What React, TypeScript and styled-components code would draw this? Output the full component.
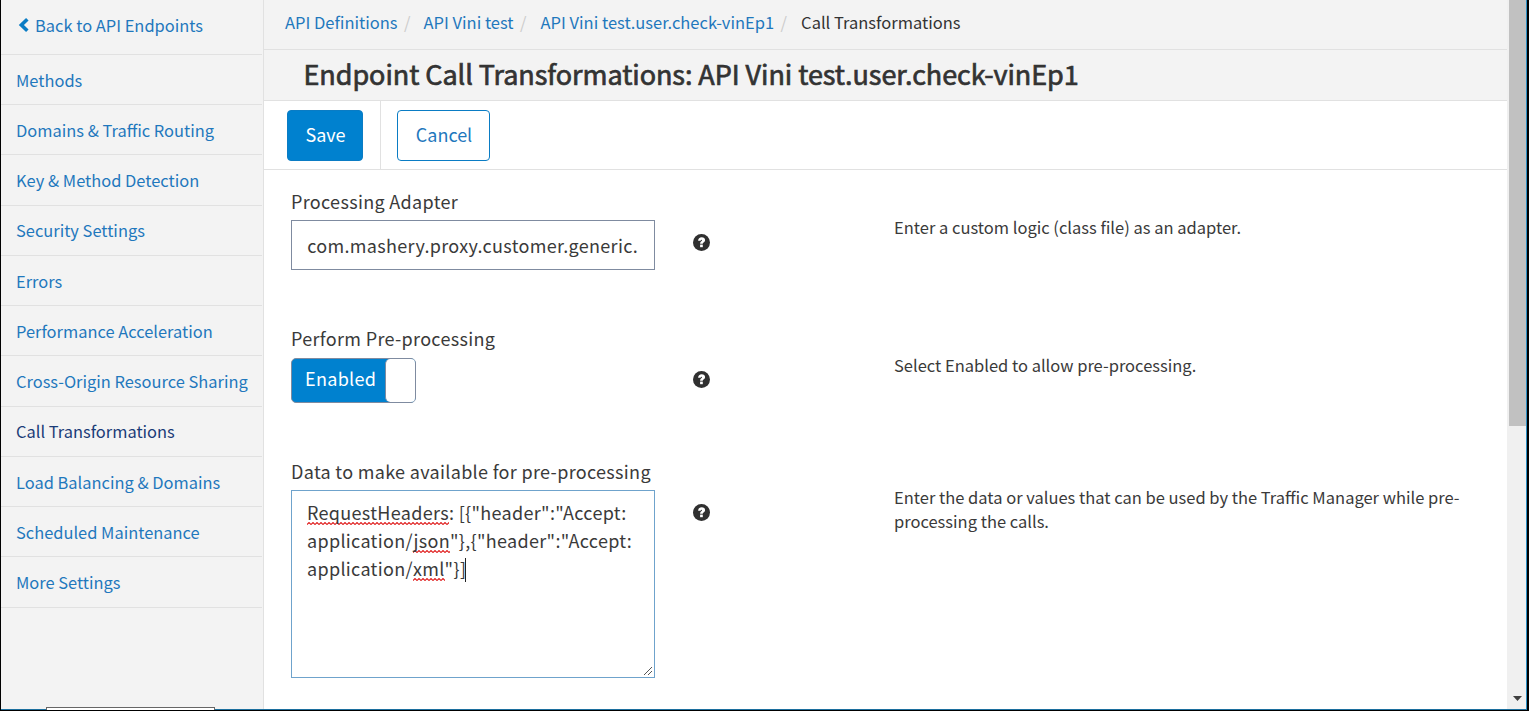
import React from 'react';
import styled, { createGlobalStyle } from 'styled-components';

const Global = createGlobalStyle`
  * { box-sizing: border-box; }
  html, body { margin: 0; padding: 0; overflow: hidden; }
  body { font-family: "Noto Sans CJK SC", "Noto Sans", sans-serif; color: #3a3a3a; background: #fff; }
`;

const Frame = styled.div`
  display: flex;
  width: 1529px;
  height: 711px;
  border-left: 1px solid #000;
  border-right: 2px solid #000;
  border-bottom: 1px solid #000;
  position: relative;
  overflow: hidden;
`;

const Window = styled.div`
  display: flex;
  flex: 1;
  min-width: 0;
  border-right: 1px solid #2a8fc4;
  border-bottom: 1px solid #1c6f9e;
`;

const Sidebar = styled.nav`
  width: 263px;
  flex: none;
  background: #f3f3f3;
  border-right: 1px solid #e1e1e1;
`;

const Item = styled.a<{ $first?: boolean; $active?: boolean }>`
  display: flex;
  align-items: center;
  gap: 5px;
  height: ${p => (p.$first ? 54.9 : 50.25)}px;
  margin-right: 1px;
  padding: ${p => (p.$first ? '0 0 4px 17px' : '0 0 0 15px')};
  border-bottom: 1px solid #e1e1e1;
  color: ${p => (p.$active ? '#1b3c78' : '#1f78bd')};
  font-size: 16.45px;
  line-height: 24px;
  white-space: nowrap;
`;

const Main = styled.main`
  flex: 1;
  min-width: 0;
  background: #fff;
`;

const Crumbs = styled.div`
  display: flex;
  height: 50px;
  padding: 10px 0 0 21px;
  background: #f3f3f3;
  border-bottom: 1px solid #e1e1e1;
  font-size: 16.5px;
  line-height: 24px;
  white-space: nowrap;
`;

const Crumb = styled.span<{ $link?: boolean }>`
  color: ${p => (p.$link ? '#1f78bd' : '#333')};
`;

const Slash = styled.span<{ $w: number }>`
  width: ${p => p.$w}px;
  padding-left: 6.5px;
  color: #ccc;
`;

const Title = styled.h1`
  margin: 0;
  height: 51px;
  padding: 4px 0 0 39.5px;
  background: #f3f3f3;
  border-bottom: 1px solid #e1e1e1;
  color: #333;
  font-size: 27px;
  line-height: 40px;
  font-weight: 400;
  letter-spacing: -0.06px;
  -webkit-text-stroke: 0.7px #333;
  white-space: nowrap;
`;

const Toolbar = styled.div`
  display: flex;
  height: 69px;
  border-bottom: 1px solid #e1e1e1;
`;

const ToolCell = styled.div<{ $divided?: boolean }>`
  padding: 9px 0 0 ${p => (p.$divided ? 23 : 16)}px;
  width: ${p => (p.$divided ? 117 : 120)}px;
  ${p => p.$divided && 'border-right: 1px solid #e1e1e1;'}
`;

const Button = styled.button<{ $primary?: boolean; $w: number }>`
  display: block;
  width: ${p => p.$w}px;
  height: 51px;
  padding: 0 0 3px 1px;
  border: 1px solid #0a7cc4;
  border-radius: 4px;
  background: ${p => (p.$primary ? '#0081cf' : '#fff')};
  color: ${p => (p.$primary ? '#fff' : '#1f78bd')};
  font-family: inherit;
  font-size: 18px;
  line-height: 28px;
`;

const Form = styled.div`
  padding: 19px 0 0 27px;
`;

const Row = styled.section<{ $h: number }>`
  display: flex;
  align-items: flex-start;
  height: ${p => p.$h}px;
`;

const Field = styled.div`
  width: 364px;
  flex: none;
`;

const Label = styled.label`
  display: block;
  height: 31px;
  font-size: 18px;
  line-height: 24px;
  letter-spacing: 0.32px;
  white-space: nowrap;
`;

const Input = styled.div`
  height: 50px;
  padding: 10px 0 0 15.25px;
  border: 1px solid #7f8ba0;
  font-size: 18px;
  line-height: 28px;
  letter-spacing: 0.32px;
  white-space: nowrap;
`;

const Area = styled.div`
  position: relative;
  height: 188px;
  padding: 7px 0 0 15px;
  border: 1px solid #6fa3cc;
  font-size: 18px;
  line-height: 28px;
  letter-spacing: 0.32px;
  white-space: nowrap;
`;

const Misspelt = styled.span`
  padding-bottom: 1px;
  background: url("data:image/svg+xml,%3Csvg xmlns='http://www.w3.org/2000/svg' width='4' height='3'%3E%3Cpath d='M-1 1.500L0 2.500L2 0.500L4 2.500L5 1.500' fill='none' stroke='%23e02020' stroke-width='1.100'/%3E%3C/svg%3E") repeat-x left bottom 1px;
`;

const Caret = styled.span`
  display: inline-block;
  width: 1px;
  height: 24px;
  margin-left: -1px;
  background: #222;
  vertical-align: -6px;
`;

const Grip = styled.svg`
  position: absolute;
  right: 1px;
  bottom: 1px;
`;

const Toggle = styled.div`
  display: flex;
  width: 125px;
  height: 45px;
  margin-top: 1px;
  border: 1px solid #7f8ba0;
  border-radius: 5px;
  background: #0081cf;
  overflow: hidden;
`;

const ToggleText = styled.span`
  width: 93px;
  padding: 5px 0 0 13px;
  color: #fff;
  font-size: 18px;
  line-height: 28px;
  letter-spacing: 0.32px;
`;

const Knob = styled.span`
  flex: 1;
  background: #fff;
  border-left: 1px solid #7f8ba0;
  border-radius: 5px 0 0 5px;
`;

const Help = styled.div`
  width: 239px;
  flex: none;
  padding: 45px 0 0 38px;
  line-height: 0;
`;

const Hint = styled.p<{ $top?: number }>`
  margin: 0;
  width: 590px;
  padding-top: ${p => p.$top ?? 26}px;
  font-size: 16.5px;
  line-height: 24px;
`;

const Scroll = styled.div`
  width: 19px;
  flex: none;
  display: flex;
  flex-direction: column;
  justify-content: space-between;
  padding-left: 2px;
  background: #f0f0f0;
`;

const Thumb = styled.div`
  height: 426px;
  background: #c1c1c1;
`;

const StatusBubble = styled.div`
  position: absolute;
  left: 45px;
  bottom: 0;
  width: 169px;
  height: 3px;
  background: #fff;
  border: 1px solid #666;
  border-bottom: 0;
`;

const HelpIcon = () => (
  <Help>
    <svg width="17" height="17" viewBox="0 0 17 17">
      <circle cx="8.5" cy="8.5" r="8.5" fill="#303030" />
      <path d="M5.100 6.700C5.200 4.500 6.600 3.300 8.700 3.300c2.100 0 3.400 1.100 3.400 2.800 0 1.200-.6 1.900-1.500 2.400-.6.400-.8.700-.8 1.300H7.100c0-1.400.4-2.100 1.200-2.600.5-.3.700-.5.700-.9 0-.4-.2-.6-.6-.6-.5 0-.7.300-.7 1z" fill="#fff" />
      <rect x="7.100" y="10.600" width="2.700" height="2.600" fill="#fff" />
    </svg>
  </Help>
);

const links = [
  'Methods',
  'Domains & Traffic Routing',
  'Key & Method Detection',
  'Security Settings',
  'Errors',
  'Performance Acceleration',
  'Cross-Origin Resource Sharing',
  'Call Transformations',
  'Load Balancing & Domains',
  'Scheduled Maintenance',
  'More Settings',
];

export default function App() {
  return (
    <>
      <Global />
      <Frame>
        <Window>
          <Sidebar>
            <Item $first>
              <svg width="12" height="14" viewBox="0 0 12 14">
                <path d="M9.300 1.300L3.400 7l5.900 5.700" fill="none" stroke="#0a7cc4" strokeWidth="3.600" />
              </svg>
              Back to API Endpoints
            </Item>
            {links.map(l => (
              <Item key={l} $active={l === 'Call Transformations'}>{l}</Item>
            ))}
          </Sidebar>
          <Main>
            <Crumbs>
              <Crumb $link>API Definitions</Crumb>
              <Slash $w={26}>/</Slash>
              <Crumb $link>API Vini test</Crumb>
              <Slash $w={27}>/</Slash>
              <Crumb $link>API Vini test.user.check-vinEp1</Crumb>
              <Slash $w={27}>/</Slash>
              <Crumb>Call Transformations</Crumb>
            </Crumbs>
            <Title>Endpoint Call Transformations: API Vini test.user.check-vinEp1</Title>
            <Toolbar>
              <ToolCell $divided><Button $primary $w={76}>Save</Button></ToolCell>
              <ToolCell><Button $w={93}>Cancel</Button></ToolCell>
            </Toolbar>
            <Form>
              <Row $h={137}>
                <Field>
                  <Label>Processing Adapter</Label>
                  <Input>com.mashery.proxy.customer.generic.</Input>
                </Field>
                <HelpIcon />
                <Hint>Enter a custom logic (class file) as an adapter.</Hint>
              </Row>
              <Row $h={133}>
                <Field>
                  <Label>Perform Pre-processing</Label>
                  <Toggle><ToggleText>Enabled</ToggleText><Knob /></Toggle>
                </Field>
                <HelpIcon />
                <Hint $top={27}>Select Enabled to allow pre-processing.</Hint>
              </Row>
              <Row $h={230}>
                <Field>
                  <Label>Data to make available for pre-processing</Label>
                  <Area>
                    <Misspelt>RequestHeaders</Misspelt>: [{'{'}"header":"Accept:<br />
                    application/<Misspelt>json</Misspelt>"{'}'},{'{'}"header":"Accept:<br />
                    application/<Misspelt>xml</Misspelt>"{'}'}]<Caret />
                    <Grip width="10" height="10" viewBox="0 0 10 10">
                      <path d="M1 9L9 1M5 9L9 5" stroke="#555" fill="none" />
                    </Grip>
                  </Area>
                </Field>
                <HelpIcon />
                <Hint>Enter the data or values that can be used by the Traffic Manager while pre-<br />processing the calls.</Hint>
              </Row>
            </Form>
          </Main>
          <Scroll>
            <Thumb />
            <svg width="17" height="22" viewBox="0 0 17 22">
              <path d="M4 9h9l-4.500 5z" fill="#404040" />
            </svg>
          </Scroll>
        </Window>
        <StatusBubble />
      </Frame>
    </>
  );
}
